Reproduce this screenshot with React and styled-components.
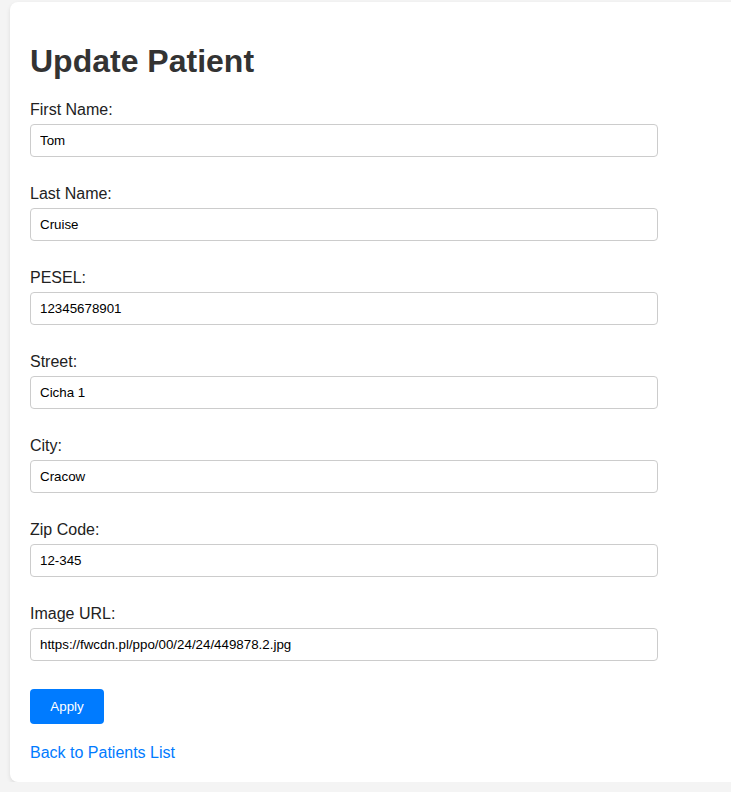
import React, { useState } from 'react';
import styled, { createGlobalStyle } from 'styled-components';

const GlobalStyle = createGlobalStyle`
    html, body {
        margin: 0;
        padding: 0;
        background: #f4f4f4;
        font-family: "Liberation Sans", Arial, sans-serif;
        overflow: hidden;
    }
`

const fields = [
    { name: 'firstName', label: 'First Name:', value: 'Tom' },
    { name: 'lastName', label: 'Last Name:', value: 'Cruise' },
    { name: 'pesel', label: 'PESEL:', value: '12345678901' },
    { name: 'street', label: 'Street:', value: 'Cicha 1' },
    { name: 'city', label: 'City:', value: 'Cracow' },
    { name: 'zipCode', label: 'Zip Code:', value: '12-345' },
    { name: 'imageUrl', label: 'Image URL:', value: 'https://fwcdn.pl/ppo/00/24/24/449878.2.jpg' },
]

const App = () => {
    const [patient, setPatient] = useState(
        Object.fromEntries(fields.map((f) => [f.name, f.value]))
    )

    const handleChange = (e) => {
        setPatient({ ...patient, [e.target.name]: e.target.value })
    }

    return (
        <>
            <GlobalStyle />
            <Card>
                <Title>Update Patient</Title>
                <form onSubmit={(e) => e.preventDefault()}>
                    {fields.map((f) => (
                        <FormGroup key={f.name}>
                            <Label htmlFor={f.name}>{f.label}</Label>
                            <Input
                                id={f.name}
                                name={f.name}
                                value={patient[f.name]}
                                onChange={handleChange}
                            />
                        </FormGroup>
                    ))}
                    <ApplyButton type="submit">Apply</ApplyButton>
                </form>
                <BackLink href="#">Back to Patients List</BackLink>
            </Card>
        </>
    )
}

const Card = styled.div`
    margin: 2px 0 0 10px;
    width: 760px;
    padding: 20px;
    background: #fff;
    border-radius: 8px;
    box-shadow: 0 2px 4px rgba(0, 0, 0, 0.1);
    box-sizing: border-box;
`

const Title = styled.h1`
    margin: 21px 0 21px;
    font-size: 32px;
    line-height: 37px;
    font-weight: bold;
    color: #333;
`

const FormGroup = styled.div`
    margin-bottom: 28px;
`

const Label = styled.label`
    display: block;
    margin-bottom: 5px;
    font-size: 16px;
    line-height: 18px;
    color: #222;
`

const Input = styled.input`
    display: block;
    width: 628px;
    height: 33px;
    padding: 8px 9px;
    box-sizing: border-box;
    border: 1px solid #ccc;
    border-radius: 4px;
    font-family: "Liberation Sans", Arial, sans-serif;
    font-size: 13.33px;
    color: #000;
    outline: none;
`

const ApplyButton = styled.button`
    display: block;
    width: 74px;
    height: 35px;
    padding: 0;
    border: none;
    border-radius: 4px;
    background: #007bff;
    color: #fff;
    font-family: "Liberation Sans", Arial, sans-serif;
    font-size: 13.33px;
    cursor: pointer;
`

const BackLink = styled.a`
    display: inline-block;
    margin-top: 20px;
    font-size: 16px;
    line-height: 18px;
    color: #007bff;
    text-decoration: none;
`

export default App
